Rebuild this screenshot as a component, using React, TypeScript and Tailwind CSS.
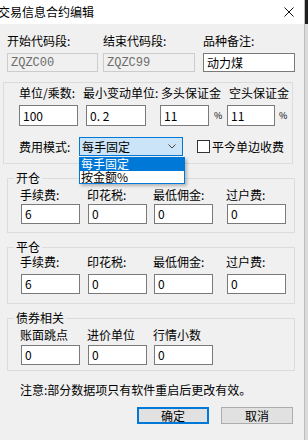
import React from 'react';

const cjk = "font-['Noto_Sans_CJK_SC',sans-serif]";

const Box: React.FC<{ value: string; w: string; h?: string; disabled?: boolean; className?: string }> = ({ value, w, h = 'h-[20px]', disabled, className = '' }) => (
  <div
    className={`${w} ${h} ${className} flex items-center border pl-[3px] text-[12px] leading-none ${
      disabled ? "border-[#cccccc] bg-[#f0f0f0] text-[#6d6d6d] font-['Liberation_Mono',monospace] text-[11px]" : 'border-[#7a7a7a] bg-white text-black'
    }`}
  >
    {value}
  </div>
);

const Field: React.FC<{ label: string; value: string; w: string; gap: string }> = ({ label, value, w, gap }) => (
  <div className={`flex flex-col ${w}`}>
    <span className="h-[14px] -ml-[1px] text-[12px] leading-[14px]">{label}</span>
    <Box value={value} w="w-[59px]" className={gap} />
  </div>
);

const Group: React.FC<{
  title: string;
  mt: string;
  top: string;
  mid: string;
  pb: string;
  fields: { label: string; value: string }[];
}> = ({ title, mt, top, mid, pb, fields }) => {
  const widths = ['w-[67px]', 'w-[66px]', 'w-[73px]', 'w-[60px]'];
  return (
    <fieldset className={`${mt} ml-[7px] w-[288px] border border-[#dcdcdc] ${pb}`}>
      <legend className="ml-[6px] px-[2px] text-[12px] leading-[14px]">{title}</legend>
      <div className={`flex pl-[13px] ${top}`}>
        {fields.map((f, i) => (
          <Field key={f.label} label={f.label} value={f.value} w={widths[i]} gap={mid} />
        ))}
      </div>
    </fieldset>
  );
};

export default function App() {
  return (
    <div className={`flex h-[440px] w-[308px] overflow-hidden bg-[#f0f0f0] text-black ${cjk}`}>
      {/* dialog */}
      <div className="flex w-[305px] flex-col border-r border-[#bdbdbd] bg-[#f0f0f0]">
        <div className="flex h-[24px] items-center justify-between bg-white">
          <span className="-ml-[2px] text-[12px] leading-[14px]">交易信息合约编辑</span>
          <svg width="10" height="10" viewBox="0 0 10 10" className="mr-[10px]">
            <path d="M0.5 0.5 L9.5 9.5 M9.5 0.5 L0.5 9.5" stroke="#111" strokeWidth="1" />
          </svg>
        </div>

        {/* code range row */}
        <div className="ml-[7px] mt-[10px] flex">
          <div className="flex w-[96px] flex-col">
            <span className="h-[14px] text-[12px] leading-[14px]">开始代码段:</span>
            <Box value="ZQZC00" w="w-[91px]" h="h-[19px]" disabled className="mt-[5px]" />
          </div>
          <div className="flex w-[100px] flex-col">
            <span className="h-[14px] text-[12px] leading-[14px]">结束代码段:</span>
            <Box value="ZQZC99" w="w-[92px]" h="h-[19px]" disabled className="mt-[5px]" />
          </div>
          <div className="flex flex-col">
            <span className="h-[14px] text-[12px] leading-[14px]">品种备注:</span>
            <Box value="动力煤" w="w-[92px]" h="h-[19px]" className="mt-[5px]" />
          </div>
        </div>

        {/* unit / margin group */}
        <div className="relative ml-[3px] mt-[10px] w-[290px] border border-[#dcdcdc] pb-[7px] pt-[3px]">
          <div className="flex pl-[15px] text-[12px] leading-[14px]">
            <span className="w-[64px]">单位/乘数:</span>
            <span className="w-[78px]">最小变动单位:</span>
            <span className="w-[68px]">多头保证金</span>
            <span>空头保证金</span>
          </div>
          <div className="mt-[5px] flex items-center pl-[15px]">
            <Box value="100" w="w-[59px]" h="h-[21px]" />
            <Box value="0. 2" w="w-[60px]" h="h-[21px]" className="ml-[8px]" />
            <Box value="11" w="w-[49px]" h="h-[21px]" className="ml-[14px]" />
            <span className="w-[18px] pl-[5px] text-[9px]">%</span>
            <Box value="11" w="w-[48px]" h="h-[21px]" />
            <span className="pl-[4px] text-[9px]">%</span>
          </div>
          <div className="mt-[11px] flex h-[19px] items-center pl-[15px]">
            <span className="w-[60px] text-[12px] leading-[14px]">费用模式:</span>
            <div className="flex h-[19px] w-[104px] items-center justify-between border border-[#0078d7] bg-[#cce4f7] pl-[2px] pr-[6px] text-[12px]">
              <span>每手固定</span>
              <svg width="8" height="5" viewBox="0 0 8 5">
                <path d="M0.5 0.5 L4 4 L7.5 0.5" fill="none" stroke="#444" strokeWidth="1" />
              </svg>
            </div>
            <div className="ml-[14px] h-[13px] w-[13px] border border-[#333] bg-white" />
            <span className="ml-[2px] text-[12px] leading-[14px]">平今单边收费</span>
          </div>

          {/* open dropdown list */}
          <div className="absolute left-[75px] top-[74px] z-10 w-[106px] border border-[#0078d7] bg-white text-[12px] leading-[12px] shadow-[2px_2px_3px_rgba(0,0,0,0.25)]">
            <div className="h-[13px] bg-[#0078d7] pl-[1px] text-white">每手固定</div>
            <div className="h-[12px] pl-[1px]">按金额%</div>
          </div>
        </div>

        <Group
          title="开仓"
          mt="mt-[7px]"
          top="mt-[3px]"
          mid="mt-[2px]"
          pb="pb-[8px]"
          fields={[
            { label: '手续费:', value: '6' },
            { label: '印花税:', value: '0' },
            { label: '最低佣金:', value: '0' },
            { label: '过户费:', value: '0' },
          ]}
        />
        <Group
          title="平仓"
          mt="mt-[7px]"
          top="mt-[1px]"
          mid="mt-[5px]"
          pb="pb-[9px]"
          fields={[
            { label: '手续费:', value: '6' },
            { label: '印花税:', value: '0' },
            { label: '最低佣金:', value: '0' },
            { label: '过户费:', value: '0' },
          ]}
        />
        <Group
          title="债券相关"
          mt="mt-[7px]"
          top="mt-[3px]"
          mid="mt-[3px]"
          pb="pb-[5px]"
          fields={[
            { label: '账面跳点', value: '0' },
            { label: '进价单位', value: '0' },
            { label: '行情小数', value: '0' },
          ]}
        />

        <p className="ml-[20px] mt-[12px] text-[12px] leading-[14px]">注意:部分数据项只有软件重启后更改有效。</p>

        <div className="mt-[10px] flex">
          <button className="ml-[137px] flex h-[17px] w-[72px] items-center justify-center border-2 border-[#0078d7] bg-[#e1e1e1] text-[12px]">
            确定
          </button>
          <button className="ml-[12px] flex h-[17px] w-[72px] items-center justify-center border border-[#adadad] bg-[#e1e1e1] text-[12px]">
            取消
          </button>
        </div>
      </div>

      {/* window behind */}
      <div className="flex w-[3px] flex-col">
        <div className="h-[24px] bg-[#1f1f1f]" />
        <div className="flex-1 bg-[#dadada]" />
      </div>
    </div>
  );
}
